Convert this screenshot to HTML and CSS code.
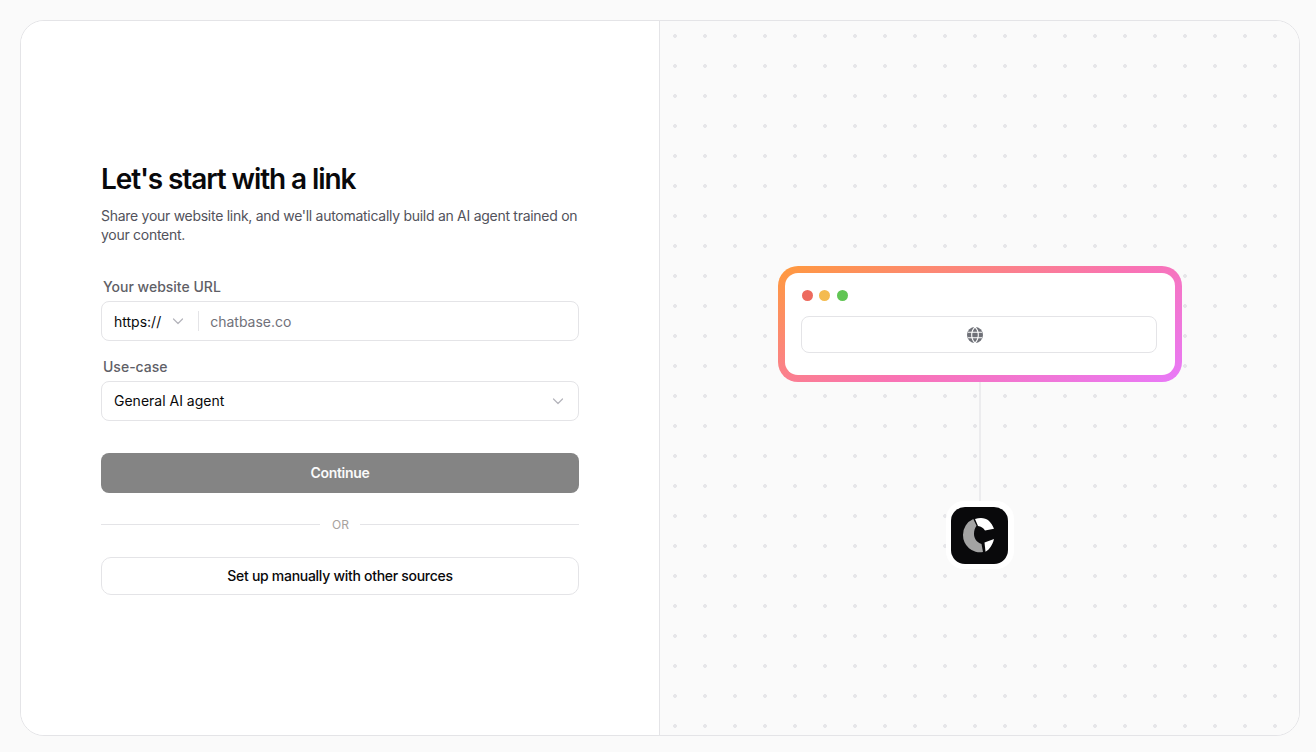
FILE: index.html
```html
<!DOCTYPE html>
<html lang="en">
<head>
<meta charset="utf-8">
<title>Let's start with a link</title>
<link rel="stylesheet" href="styles.css">
</head>
<body>
<main class="card">
  <section class="left">
    <form class="form">
      <h1 class="title">Let's start with a link</h1>
      <p class="sub">Share your website link, and we'll automatically build an AI agent trained on your content.</p>
      <label class="label label-url">Your website URL</label>
      <div class="field">
        <span class="value">https://</span>
        <svg class="chev chev-small" viewBox="0 0 16 16"><path d="M3.500 6l4.500 4.500L12.500 6"/></svg>
        <span class="sep"></span>
        <span class="placeholder">chatbase.co</span>
      </div>
      <label class="label label-use">Use-case</label>
      <div class="field field-select">
        <span class="value">General AI agent</span>
        <svg class="chev" viewBox="0 0 16 16"><path d="M3.500 6l4.500 4.500L12.500 6"/></svg>
      </div>
      <button type="button" class="btn-primary">Continue</button>
      <div class="or"><span class="or-line"></span><span class="or-text">OR</span><span class="or-line"></span></div>
      <button type="button" class="btn-secondary">Set up manually with other sources</button>
    </form>
  </section>
  <section class="right">
    <div class="browser">
      <div class="browser-inner">
        <div class="lights"><span class="light red"></span><span class="light amber"></span><span class="light green"></span></div>
        <div class="urlbar">
          <svg class="globe" viewBox="0 0 16 16">
            <circle cx="8" cy="8" r="8" fill="#6f7178"/>
            <path d="M8 0C5.200 2.600 4.700 5.200 4.700 8s.5 5.400 3.300 8c2.800-2.600 3.300-5.200 3.300-8S10.800 2.600 8 0z" fill="none" stroke="#fff" stroke-width="1.100"/>
            <path d="M.8 5.300h14.400M.8 10.700h14.400" fill="none" stroke="#fff" stroke-width="1.100"/>
          </svg>
        </div>
      </div>
    </div>
    <div class="connector"></div>
    <div class="logo-wrap">
      <div class="logo">
        <svg class="logo-mark" viewBox="0 0 57 57">
          <path d="M22.300 12A17 17 0 0 0 12 28A17 17 0 0 0 32 45L30.500 37C25.500 35.500 23 31 23 27C23 23.500 24 21 25.500 18.800Z" fill="#a3a3a3"/>
          <path d="M24 12C26 11.200 28 11 30 11C36 11 40.500 15 43 21.800L34 23.500C32.500 21 30 19.500 27 19Z" fill="#fff"/>
          <path d="M33.500 35.500L43 32C41.500 38 38.500 42.500 34.500 44.700Z" fill="#fff"/>
        </svg>
      </div>
    </div>
  </section>
</main>
</body>
</html>
```
FILE: styles.css
```css
* { box-sizing: border-box; }
html, body { height: 100%; }
body {
  margin: 0;
  padding: 20px 16px 16px 20px;
  background: #fafafa;
  font-family: Inter, "Liberation Sans", sans-serif;
  color: #09090b;
}
.card {
  display: flex;
  width: 1280px;
  height: 716px;
  border: 1px solid #e4e4e7;
  border-radius: 24px;
  overflow: hidden;
  background: #fff;
}
.left {
  flex: 0 0 638px;
  display: flex;
  align-items: center;
  padding-left: 80px;
  background: #fff;
}
.form { width: 478px; display: flex; flex-direction: column; }
.title {
  margin: 0;
  font-size: 28px;
  line-height: 36px;
  font-weight: 600;
  letter-spacing: -1.100px;
  color: #09090b;
}
.sub {
  margin: 9px 0 0;
  font-size: 14px;
  line-height: 19px;
  letter-spacing: -0.280px;
  color: #52525b;
}
.label {
  display: block;
  margin-left: 2px;
  font-size: 14px;
  line-height: 20px;
  font-weight: 500;
  color: #5f5f67;
}
.label-url { margin-top: 33px; margin-bottom: 4px; }
.label-use { margin-top: 16px; margin-bottom: 4px; }
.field {
  display: flex;
  align-items: center;
  height: 40px;
  padding: 0 12px;
  border: 1px solid #e4e4e7;
  border-radius: 8px;
  background: #fff;
  font-size: 14px;
}
.field-select { justify-content: space-between; padding-bottom: 1px; }
.field-select .chev { margin-bottom: -1px; }
.value { color: #09090b; }
.placeholder { color: #71717a; }
.chev { width: 16px; height: 16px; fill: none; stroke: #b4b4bb; stroke-width: 1.200; stroke-linecap: round; stroke-linejoin: round; }
.chev-small { margin-left: 9px; }
.sep { width: 1px; height: 20px; margin: 0 11px 0 12px; background: #e4e4e7; }
.btn-primary {
  height: 40px;
  margin-top: 32px;
  padding: 0 0 2px;
  border: 0;
  border-radius: 8px;
  background: #848484;
  color: #fafafa;
  font: 600 14px Inter, "Liberation Sans", sans-serif;
  letter-spacing: -0.280px;
}
.or { display: flex; align-items: center; gap: 12px; margin-top: 21px; height: 20px; }
.or-line { flex: 1; height: 1px; background: #e4e4e7; }
.or-text { font-size: 12px; color: #a8a29e; width: 16px; text-align: center; white-space: nowrap; }
.btn-secondary {
  height: 38px;
  margin-top: 23px;
  padding: 0 0 2px;
  border: 1px solid #e4e4e7;
  border-radius: 10px;
  background: #fff;
  color: #09090b;
  font: 500 14px Inter, "Liberation Sans", sans-serif;
  letter-spacing: -0.290px;
}
.right {
  flex: 1;
  display: flex;
  flex-direction: column;
  align-items: center;
  padding-top: 245px;
  border-left: 1px solid #e4e4e7;
  background-color: #fafafa;
  background-image: radial-gradient(circle, #e6e6e9 1.600px, transparent 2.200px);
  background-size: 30px 30px;
  background-position: 0 0;
}
.browser {
  width: 404px;
  height: 116px;
  padding: 7px;
  border-radius: 20px;
  background: linear-gradient(155deg, #ff9a3c 0%, #f973b4 55%, #e879f9 100%);
}
.browser-inner {
  height: 100%;
  padding: 17px 18px 0 16px;
  border-radius: 13px;
  background: #fff;
}
.lights { display: flex; gap: 6.750px; margin-bottom: 15px; padding-left: 1px; }
.light { width: 11px; height: 11px; border-radius: 50%; }
.red { background: #ed6a5e; }
.amber { background: #f4bb4f; }
.green { background: #61c554; }
.urlbar {
  display: flex;
  align-items: center;
  justify-content: center;
  height: 37px;
  border: 1px solid #e4e4e7;
  border-radius: 8px;
  background: #fff;
}
.globe { width: 16px; height: 16px; margin-left: -8px; }
.connector { width: 2px; height: 119px; background: #ececee; }
.logo-wrap {
  width: 68px;
  height: 68px;
  padding: 6px 5px 5px 5px;
  border-radius: 18px;
  background: #fff;
}
.logo {
  width: 57px;
  height: 57px;
  border-radius: 14px;
  background: #09090b;
}
.logo-mark { display: block; width: 57px; height: 57px; }
```
